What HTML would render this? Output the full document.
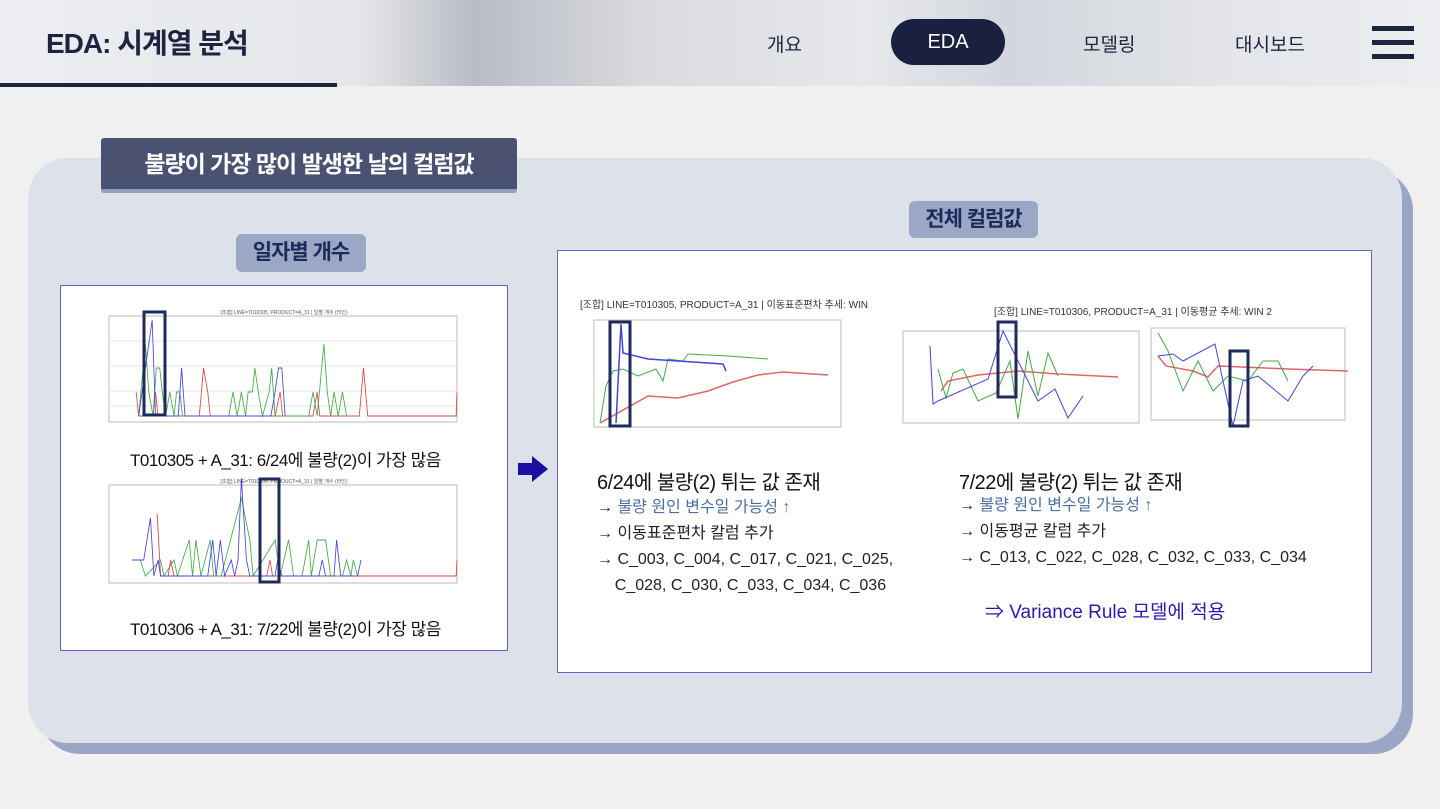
<!DOCTYPE html>
<html><head><meta charset="utf-8"><style>
*{margin:0;padding:0;box-sizing:border-box}
body{width:1440px;height:809px;overflow:hidden;background:#f0f0f0;font-family:"Liberation Sans","Noto Sans CJK KR",sans-serif;position:relative}
.abs{position:absolute}
.hdr{left:0;top:0;width:1440px;height:86px;background:linear-gradient(90deg,#eceef2 0%,#e4e6ea 25%,#b9bcc3 33%,#d9dbe0 45%,#e6e8ec 60%,#d3d6dc 70%,#e3e5ea 85%,#eceef2 100%)}
.title{left:46px;top:22px;font-size:28px;font-weight:bold;color:#1e2340;letter-spacing:-1px}
.bar{left:0;top:83px;width:337px;height:4px;background:#1e2340}
.nav{top:30px;font-size:19px;color:#1e2340}
.pill{left:891px;top:19px;width:114px;height:46px;border-radius:23px;background:#1a2040;color:#fff;font-size:20px;text-align:center;line-height:46px}
.hb{left:1372px;width:42px;height:5px;background:#1e2340}
.shadow{left:40px;top:170px;width:1373px;height:584px;background:#9aa6c4;border-radius:40px}
.card{left:28px;top:158px;width:1374px;height:585px;background:#dde1ea;border-radius:40px}
.tab{left:101px;top:138px;width:416px;height:55px;background:#4b5170;border-bottom:4px solid #8ea0c2;border-radius:3px;color:#fff;font-size:23px;font-weight:bold;text-align:center;line-height:52px;letter-spacing:-1px}
.lbl{background:#9aa8c6;color:#1e2a5a;font-weight:bold;font-size:21px;text-align:center;border-radius:6px;letter-spacing:-1px}
.box{background:#fff;border:1px solid #6b5fd0}
.cap{font-size:17px;color:#111;letter-spacing:-0.5px}
.t1{font-size:20px;color:#111;letter-spacing:-0.5px}
.b{font-size:16px;color:#222;line-height:26px}
.bl{color:#4a6fa0}
</style></head><body>
<div class="abs hdr"></div>
<div class="abs title">EDA: 시계열 분석</div>
<div class="abs bar"></div>
<div class="abs nav" style="left:767px">개요</div>
<div class="abs pill">EDA</div>
<div class="abs nav" style="left:1083px">모델링</div>
<div class="abs nav" style="left:1235px">대시보드</div>
<div class="abs hb" style="top:26px"></div>
<div class="abs hb" style="top:40px"></div>
<div class="abs hb" style="top:54px"></div>

<div class="abs shadow"></div>
<div class="abs card"></div>
<div class="abs tab">불량이 가장 많이 발생한 날의 컬럼값</div>
<div class="abs lbl" style="left:236px;top:234px;width:130px;height:38px;line-height:38px">일자별 개수</div>
<div class="abs lbl" style="left:909px;top:201px;width:129px;height:37px;line-height:37px">전체 컬럼값</div>

<div class="abs box" style="left:60px;top:285px;width:448px;height:366px">
<svg width="446" height="364" style="position:absolute;left:0;top:0">
<text x="223" y="28" font-size="5" text-anchor="middle" fill="#555">[조합] LINE=T010305, PRODUCT=A_31 | 일별 개수 (라인)</text>
<rect x="48" y="30" width="348" height="106" fill="none" stroke="#bbb"/>
<g stroke="#e6e6e6"><line x1="48" y1="55" x2="396" y2="55"/><line x1="48" y1="80" x2="396" y2="80"/><line x1="48" y1="105" x2="396" y2="105"/><line x1="48" y1="120" x2="396" y2="120"/></g>
<g transform="translate(12,0) scale(0.842,1)">
<polyline fill="none" stroke="#d44" stroke-width="1" points="75,106 78,130 95,130 98,106 101,130 150,130 155,82 160,106 163,130 240,130 246,106 249,130 285,130 290,106 293,130 340,130 345,82 350,130 455,130 456,106"/>
<polyline fill="none" stroke="#4a4" stroke-width="1" points="78,130 86,58 90,106 95,130 99,82 103,82 106,106 110,130 115,106 120,130 123,106 127,106 130,130 185,130 190,106 195,130 200,106 205,130 208,106 213,106 216,82 220,106 225,130 233,106 236,82 240,130 280,130 285,106 290,130 298,58 302,106 306,130 310,106 315,130 320,106 325,130 330,130"/>
<polyline fill="none" stroke="#44d" stroke-width="1" points="78,130 94,34 98,130 125,130 129,82 133,130 235,130 240,106 244,82 248,82 252,130"/>
</g>
<rect x="83" y="26" width="21" height="103" fill="none" stroke="#1e2a5a" stroke-width="3"/>
<text x="223" y="197" font-size="5" text-anchor="middle" fill="#555">[조합] LINE=T010306, PRODUCT=A_31 | 일별 개수 (라인)</text>
<rect x="48" y="199" width="348" height="98" fill="none" stroke="#bbb"/>
<g transform="translate(12,0) scale(0.842,1)">
<polyline fill="none" stroke="#d44" stroke-width="1" points="100,228 104,290 113,290 116,274 120,290 230,290 234,274 237,290 400,290 455,290 456,274"/>
<polyline fill="none" stroke="#4a4" stroke-width="1" points="80,274 86,290 104,274 108,290 120,274 124,290 138,254 142,290 146,254 152,290 163,254 167,290 176,290 200,212 210,254 214,290 240,254 246,290 256,254 262,290 272,290 280,254 283,290 290,254 300,254 306,290 320,290 325,274 330,290 333,274 338,290"/>
<polyline fill="none" stroke="#44d" stroke-width="1" points="70,274 84,274 92,232 96,290 101,274 104,290 160,290 166,254 170,290 175,254 180,290 188,274 192,290 196,274 200,192 206,274 210,290 240,290 243,274 248,290 292,290 296,274 300,290 310,290 313,254 318,290 338,290 342,274"/>
</g>
<rect x="199" y="193" width="19" height="103" fill="none" stroke="#1e2a5a" stroke-width="3"/>
</svg>
<div class="abs cap" style="left:69px;top:160px">T010305 + A_31: 6/24에 불량(2)이 가장 많음</div>
<div class="abs cap" style="left:69px;top:329px">T010306 + A_31: 7/22에 불량(2)이 가장 많음</div>
</div>

<svg class="abs" style="left:518px;top:456px" width="30" height="26"><polygon points="0,7 14,7 14,0 30,13 14,26 14,19 0,19" fill="#1a0fa0"/></svg>

<div class="abs box" style="left:557px;top:250px;width:815px;height:423px">
<svg width="813" height="200" style="position:absolute;left:0;top:0">
<text x="22" y="57" font-size="10" fill="#333">[조합] LINE=T010305, PRODUCT=A_31 | 이동표준편차 추세: WIN</text>
<rect x="36" y="69" width="247" height="107" fill="none" stroke="#bbb"/>
<polyline fill="none" stroke="#d66" stroke-width="1.5" points="42,172 90,145 120,147 150,140 175,131 200,124 225,121 270,124"/>
<polyline fill="none" stroke="#4a4" stroke-width="1" points="42,172 48,135 55,120 65,118 80,125 98,118 105,130 110,108 125,110 130,103 170,105 210,108"/>
<polyline fill="none" stroke="#44d" stroke-width="1.5" points="58,172 63,73 65,102 90,108 165,113 168,120"/>
<rect x="52" y="71" width="20" height="104" fill="none" stroke="#1e2a5a" stroke-width="3"/>
<text x="436" y="64" font-size="10" fill="#333">[조합] LINE=T010306, PRODUCT=A_31 | 이동평균 추세: WIN 2</text>
<rect x="345" y="80" width="236" height="92" fill="none" stroke="#bbb"/>
<polyline fill="none" stroke="#d66" stroke-width="1.5" points="383,140 390,130 420,124 460,120 500,123 560,126"/>
<polyline fill="none" stroke="#4a4" stroke-width="1" points="380,118 388,147 395,122 405,118 420,150 438,142 452,110 460,168 470,100 480,145 490,102 500,125"/>
<polyline fill="none" stroke="#44d" stroke-width="1" points="372,95 375,153 380,150 430,128 445,80 455,100 480,150 497,138 510,167 525,145"/>
<rect x="440" y="71" width="18" height="75" fill="none" stroke="#1e2a5a" stroke-width="3"/>
<rect x="593" y="77" width="194" height="92" fill="none" stroke="#bbb"/>
<polyline fill="none" stroke="#d66" stroke-width="1.5" points="600,105 608,115 635,120 650,126 660,115 730,118 790,120"/>
<polyline fill="none" stroke="#4a4" stroke-width="1" points="600,82 610,100 625,140 640,110 655,140 670,125 690,130 705,110 720,110 730,130"/>
<polyline fill="none" stroke="#44d" stroke-width="1" points="600,105 615,103 625,110 657,93 665,130 675,175 685,130 700,125 730,150 745,125 755,115"/>
<rect x="672" y="100" width="18" height="75" fill="none" stroke="#1e2a5a" stroke-width="3"/>
</svg>
<div class="abs t1" style="left:39px;top:215px">6/24에 불량(2) 튀는 값 존재</div>
<div class="abs b" style="left:39px;top:244px"><span>→ </span><span class="bl">불량 원인 변수일 가능성 ↑</span><br>→ 이동표준편차 칼럼 추가<br>→ C_003, C_004, C_017, C_021, C_025,<br>&nbsp;&nbsp;&nbsp;&nbsp;C_028, C_030, C_033, C_034, C_036</div>
<div class="abs t1" style="left:401px;top:215px">7/22에 불량(2) 튀는 값 존재</div>
<div class="abs b" style="left:401px;top:242px"><span>→ </span><span class="bl">불량 원인 변수일 가능성 ↑</span><br>→ 이동평균 칼럼 추가<br>→ C_013, C_022, C_028, C_032, C_033, C_034</div>
<div class="abs" style="left:427px;top:346px;font-size:19px;color:#2a1ab0">⇒ Variance Rule 모델에 적용</div>
</div>
</body></html>
